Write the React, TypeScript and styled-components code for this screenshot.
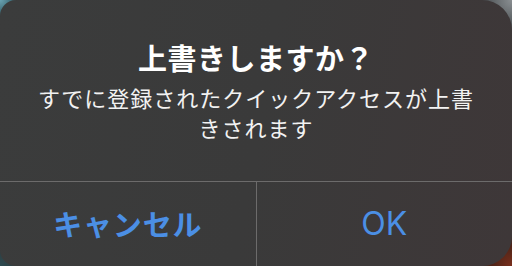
import React from "react";
import styled, { createGlobalStyle } from "styled-components";

const GlobalStyle = createGlobalStyle`
  html, body {
    margin: 0;
    padding: 0;
    width: 512px;
    height: 266px;
    overflow: hidden;
  }
  body {
    background:
      radial-gradient(circle at 0 0, #6aa3b2 0, #3e6b76 12px, transparent 26px),
      radial-gradient(circle at 512px 0, #8a8f92 0, #5d6265 20px, transparent 40px),
      radial-gradient(circle at 512px 266px, #7a2f1c 0, #4e2418 20px, transparent 40px),
      radial-gradient(circle at 0 266px, #2d4a50 0, transparent 30px),
      #2e3334;
    font-family: Inter, "Noto Sans CJK JP", sans-serif;
  }
`;

const Dialog = styled.div`
  width: 512px;
  height: 266px;
  box-sizing: border-box;
  border-radius: 16px 30px 30px 16px;
  background: linear-gradient(100deg, #3b3c3c 0%, #3a3a3a 50%, #3e3738 100%);
  display: flex;
  flex-direction: column;
  overflow: hidden;
`;

const Content = styled.div`
  height: 182px;
  box-sizing: border-box;
  padding-top: 39px;
  display: flex;
  flex-direction: column;
  align-items: center;
  border-bottom: 1px solid #6c6b6b;
  color: #ffffff;
  font-family: "Noto Sans CJK JP", sans-serif;
`;

const Title = styled.div`
  font-size: 29px;
  font-weight: 700;
  line-height: 36px;
  letter-spacing: 0.5px;
  margin-bottom: 7px;
`;

const Message = styled.div`
  font-size: 22px;
  line-height: 30px;
  letter-spacing: 1px;
  text-align: center;
  width: 450px;
  color: #f2f2f2;
`;

const Actions = styled.div`
  flex: 1;
  display: grid;
  grid-template-columns: 1fr 1px 1fr;
`;

const Separator = styled.div`
  background: #6c6b6b;
`;

const ActionButton = styled.button<{ $primary?: boolean }>`
  border: none;
  background: transparent;
  margin: 0;
  padding: 0 0 2px;
  display: flex;
  align-items: center;
  justify-content: center;
  color: #4b8fe5;
  font-family: ${(p) =>
    p.$primary ? `"Noto Sans CJK JP", sans-serif` : `Inter, "Noto Sans CJK JP", sans-serif`};
  font-size: ${(p) => (p.$primary ? "29px" : "32px")};
  letter-spacing: ${(p) => (p.$primary ? "0.8px" : "0")};
  font-weight: ${(p) => (p.$primary ? 700 : 400)};
  cursor: pointer;
`;

export default function App() {
  return (
    <>
      <GlobalStyle />
      <Dialog>
        <Content>
          <Title>上書きしますか？</Title>
          <Message>すでに登録されたクイックアクセスが上書きされます</Message>
        </Content>
        <Actions>
          <ActionButton $primary>キャンセル</ActionButton>
          <Separator />
          <ActionButton>OK</ActionButton>
        </Actions>
      </Dialog>
    </>
  );
}
